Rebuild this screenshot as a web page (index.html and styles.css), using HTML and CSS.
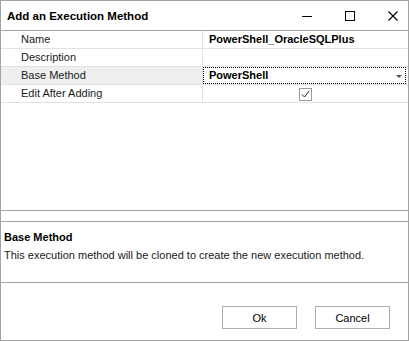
FILE: index.html
```html
<!DOCTYPE html>
<html>
<head>
<meta charset="utf-8">
<title>Add an Execution Method</title>
<link rel="stylesheet" href="styles.css">
</head>
<body>
<div class="window">
	<div class="titlebar">
		<span class="title">Add an Execution Method</span>
		<div class="controls">
			<svg class="ctl" width="12" height="12" viewBox="0 0 12 12"><path d="M1 6.5h10" stroke="#000" stroke-width="1"/></svg>
			<svg class="ctl" width="12" height="12" viewBox="0 0 12 12"><rect x="1.5" y="1.5" width="9" height="9" fill="none" stroke="#000" stroke-width="1"/></svg>
			<svg class="ctl" width="12" height="12" viewBox="0 0 12 12"><path d="M1.5 1.5l9 9M10.5 1.5l-9 9" stroke="#000" stroke-width="1.1"/></svg>
		</div>
	</div>

	<div class="grid">
		<div class="row">
			<div class="label">Name</div>
			<div class="value bold">PowerShell_OracleSQLPlus</div>
		</div>
		<div class="row">
			<div class="label">Description</div>
			<div class="value"></div>
		</div>
		<div class="row selected">
			<div class="label">Base Method</div>
			<div class="value bold focus">PowerShell<span class="arrow"></span></div>
		</div>
		<div class="row">
			<div class="label">Edit After Adding</div>
			<div class="value center">
				<span class="check">
					<svg width="11" height="11" viewBox="0 0 11 11"><path d="M2 5.5l2.5 2.5 4.5-6" fill="none" stroke="#222" stroke-width="1"/></svg>
				</span>
			</div>
		</div>
	</div>

	<div class="desc">
		<div class="desc_title">Base Method</div>
		<div class="desc_text">This execution method will be cloned to create the new execution method.</div>
	</div>

	<div class="buttons">
		<button class="btn">Ok</button>
		<button class="btn">Cancel</button>
	</div>
</div>
</body>
</html>
```

FILE: styles.css
```css
body{
	margin:0;
	background:#fff;
	font-family:"Liberation Sans", Arial, sans-serif;
	font-size:11px;
	color:#1a1a1a;
}

.window{
	width:409px;
	height:341px;
	box-sizing:border-box;
	border:1px solid #a3a3a3;
	display:flex;
	flex-direction:column;
}

.titlebar{
	height:30px;
	box-sizing:border-box;
	border-bottom:1px solid #a3a3a3;
	display:flex;
	align-items:center;
	justify-content:space-between;
	padding-left:6px;
}
.title{
	font-weight:bold;
	font-size:11.5px;
	color:#000;
}
.controls{
	display:flex;
	align-items:center;
	gap:31px;
	padding-right:9px;
}
.ctl{
	display:block;
}

.grid{
	height:180px;
	box-sizing:border-box;
	border-bottom:1px solid #a3a3a3;
}
.row{
	display:flex;
	height:18px;
	box-sizing:border-box;
	border-bottom:1px solid #e2e2e2;
}
.label{
	width:202px;
	box-sizing:border-box;
	padding-left:20px;
	border-right:1px solid #e2e2e2;
	line-height:17px;
}
.value{
	flex:1;
	position:relative;
	padding-left:6px;
	line-height:17px;
	color:#000;
}
.bold{
	font-weight:bold;
}
.selected .label{
	background:#efefef;
}
.focus{
	outline:1px dotted #000;
	outline-offset:-1px;
	margin-right:2px;
}
.arrow{
	position:absolute;
	right:4px;
	top:8px;
	border-left:3px solid transparent;
	border-right:3px solid transparent;
	border-top:3px solid #555;
}
.center{
	display:flex;
	justify-content:center;
	align-items:center;
	padding-left:0;
}
.check{
	width:13px;
	height:13px;
	box-sizing:border-box;
	border:1px solid #9a9a9a;
	display:flex;
	align-items:center;
	justify-content:center;
	margin-top:1px;
}
.check svg{
	display:block;
}

.desc{
	margin-top:10px;
	height:62px;
	box-sizing:border-box;
	border-top:1px solid #a3a3a3;
	border-bottom:1px solid #a3a3a3;
	padding:8px 3px 0 3px;
}
.desc_title{
	font-weight:bold;
	color:#000;
	line-height:14px;
}
.desc_text{
	margin-top:4px;
	line-height:14px;
}

.buttons{
	flex:1;
	display:flex;
	justify-content:flex-end;
	align-items:flex-start;
	gap:18px;
	padding:23px 18px 0 0;
}
.btn{
	width:75px;
	height:23px;
	background:#fff;
	border:1px solid #adadad;
	font-family:"Liberation Sans", Arial, sans-serif;
	font-size:11px;
	color:#000;
	padding:0;
}
```
